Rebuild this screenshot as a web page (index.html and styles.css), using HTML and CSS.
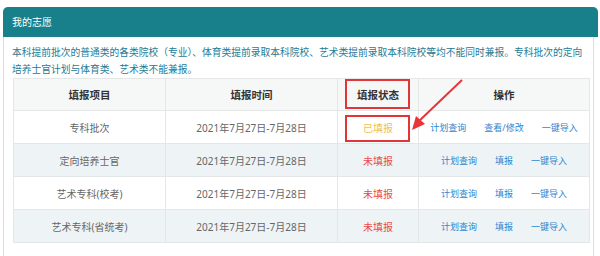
FILE: index.html
```html
<!DOCTYPE html>
<html lang="zh-CN">
<head>
<meta charset="utf-8">
<link rel="stylesheet" href="styles.css">
</head>
<body>
<div class="panel">
  <div class="panel-head">我的志愿</div>
  <div class="panel-body">
    <p class="intro">本科提前批次的普通类的各类院校（专业）、体育类提前录取本科院校、艺术类提前录取本科院校等均不能同时兼报。专科批次的定向培养士官计划与体育类、艺术类不能兼报。</p>
    <table class="grid">
      <colgroup>
        <col class="c1"><col class="c2"><col class="c3"><col class="c4">
      </colgroup>
      <thead>
        <tr><th>填报项目</th><th>填报时间</th><th>填报状态</th><th>操作</th></tr>
      </thead>
      <tbody>
        <tr>
          <td>专科批次</td><td>2021年7月27日-7月28日</td><td class="done">已填报</td>
          <td class="ops"><a>计划查询</a><a>查看/修改</a><a>一键导入</a></td>
        </tr>
        <tr>
          <td>定向培养士官</td><td>2021年7月27日-7月28日</td><td class="todo">未填报</td>
          <td class="ops"><a>计划查询</a><a>填报</a><a>一键导入</a></td>
        </tr>
        <tr>
          <td>艺术专科(校考)</td><td>2021年7月27日-7月28日</td><td class="todo">未填报</td>
          <td class="ops"><a>计划查询</a><a>填报</a><a>一键导入</a></td>
        </tr>
        <tr>
          <td>艺术专科(省统考)</td><td>2021年7月27日-7月28日</td><td class="todo">未填报</td>
          <td class="ops"><a>计划查询</a><a>填报</a><a>一键导入</a></td>
        </tr>
      </tbody>
    </table>
  </div>
</div>
<div class="mark mark-head"></div>
<div class="mark mark-cell"></div>
<svg class="arrow" width="60" height="56" viewBox="0 0 60 56">
  <line x1="54" y1="2" x2="10" y2="44" stroke="#e8353a" stroke-width="2"/>
  <polygon points="4,52 8,38 17,46" fill="#e8353a"/>
</svg>
</body>
</html>
```
FILE: styles.css
```css
html, body {
  margin: 0;
  padding: 0;
  background: #fff;
}
body {
  width: 600px;
  height: 256px;
  overflow: hidden;
  position: relative;
  font-family: "Noto Sans", "Noto Sans CJK SC", sans-serif;
}
.panel {
  margin: 7px 6px 0 3px;
  border: 1px solid #dcdcdc;
  border-top: none;
  border-radius: 5px 5px 0 0;
  height: 260px;
}
.panel-head {
  background: #18808a;
  color: #fff;
  height: 30px;
  line-height: 30px;
  padding-left: 9px;
  font-size: 10px;
  border-radius: 5px 5px 0 0;
  margin: 0 -5px 0 -1px;
}
.panel-body {
  padding: 0 5px 0 9px;
}
.intro {
  margin: 0;
  padding: 7px 0 0 0;
  margin-left: -1px;
  font-size: 9.75px;
  line-height: 17px;
  color: #1f7a95;
}
.grid {
  border-collapse: collapse;
  width: 576px;
  table-layout: fixed;
  font-size: 10px;
  color: #666;
}
.c1 { width: 152px; }
.c2 { width: 172px; }
.c3 { width: 81px; }
.c4 { width: 171px; }
.grid th, .grid td {
  border: 1px solid #e4e7e8;
  text-align: center;
  padding: 0;
  white-space: nowrap;
}
.grid th {
  height: 31px;
  background: #f6f7f7;
  color: #333;
  font-size: 10.5px;
  font-weight: bold;
}
.grid td {
  height: 32px;
}
.grid tbody tr:nth-child(even) td {
  background: #eef3f5;
}
.done { color: #f0c050; }
.todo { color: #ec4a4a; }
.ops { font-size: 9px; }
.ops a {
  color: #2f86d0;
  margin: 0 9px;
  cursor: pointer;
}
.mark {
  position: absolute;
  border: 2px solid #e0363a;
  box-sizing: border-box;
}
.mark-head {
  left: 345px;
  top: 79px;
  width: 65px;
  height: 30px;
}
.mark-cell {
  left: 345px;
  top: 115px;
  width: 65px;
  height: 27px;
}
.arrow {
  position: absolute;
  left: 408px;
  top: 78px;
}
```
